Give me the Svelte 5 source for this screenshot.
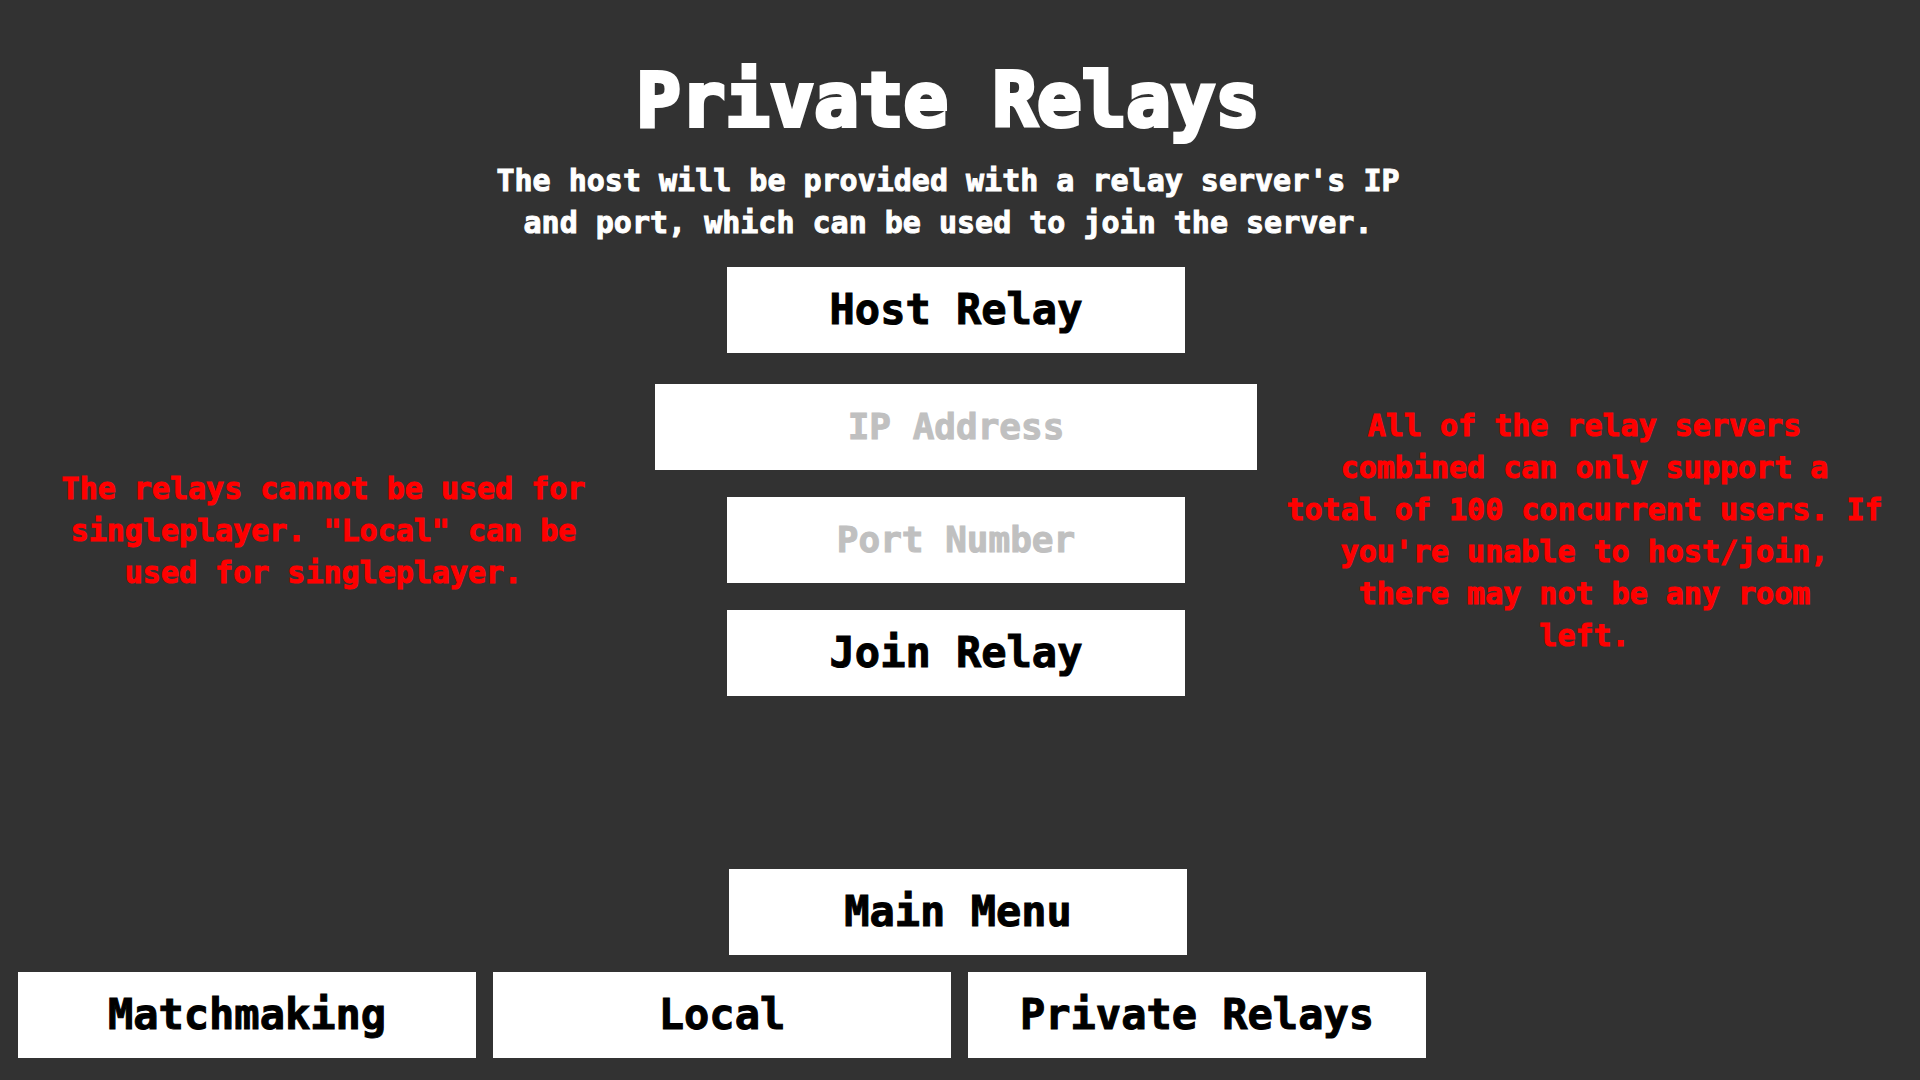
<script>
  let ip = $state('');
  let port = $state('');
  const tabs = ['Matchmaking', 'Local', 'Private Relays'];
</script>

<div class="page">
  <header>
    <h1>Private Relays</h1>
    <p>
      The host will be provided with a relay server's IP<br />
      and port, which can be used to join the server.
    </p>
  </header>

  <main>
    <aside class="left">
      <p>
        The relays cannot be used for<br />
        singleplayer. "Local" can be<br />
        used for singleplayer.
      </p>
    </aside>

    <form onsubmit={(e) => e.preventDefault()}>
      <button class="box" type="button">Host Relay</button>
      <div class="fields">
        <input class="box wide" aria-label="IP Address" placeholder="IP Address" bind:value={ip} />
        <input class="box" aria-label="Port Number" placeholder="Port Number" bind:value={port} />
        <button class="box" type="submit">Join Relay</button>
      </div>
    </form>

    <aside>
      <p>
        All of the relay servers<br />
        combined can only support a<br />
        total of 100 concurrent users. If<br />
        you're unable to host/join,<br />
        there may not be any room<br />
        left.
      </p>
    </aside>
  </main>

  <footer>
    <button class="box" type="button">Main Menu</button>
    <nav>
      {#each tabs as tab}
        <button class="box" type="button">{tab}</button>
      {/each}
    </nav>
  </footer>
</div>

<style>
  :global(body) {
    margin: 0;
    background: #323232;
  }

  .page {
    box-sizing: border-box;
    min-height: 100vh;
    display: flex;
    flex-direction: column;
    padding: 56px 0 22px;
    color: #fff;
    background: #323232;
    font-family: 'DejaVu Sans Mono', 'Liberation Mono', monospace;
    font-weight: 700;
    -webkit-text-stroke: 1px currentColor;
  }

  header {
    padding-right: 24px;
    text-align: center;
  }

  h1,
  p {
    margin: 0;
  }

  h1 {
    font-size: 74px;
    line-height: 88px;
    -webkit-text-stroke-width: 4px;
  }

  p {
    font-size: 30px;
    line-height: 42px;
  }

  header p {
    margin-top: 16px;
  }

  main {
    display: grid;
    grid-template-columns: minmax(0, 1fr) minmax(0, 602px) minmax(0, 1fr);
    margin-top: 23px;
    padding-right: 8px;
  }

  aside {
    display: flex;
    align-items: center;
    justify-content: center;
    padding-top: 98px;
    color: #f00;
    text-align: center;
  }

  .left {
    padding-right: 8px;
  }

  form,
  .fields {
    display: flex;
    flex-direction: column;
    align-items: center;
  }

  form {
    gap: 31px;
  }

  .fields {
    align-self: stretch;
    gap: 27px;
  }

  .box {
    box-sizing: border-box;
    width: 458px;
    max-width: 100%;
    height: 86px;
    padding: 0 0 2px;
    border: 0;
    border-radius: 0;
    background: #fff;
    color: #000;
    font: inherit;
    font-size: 42px;
    text-align: center;
    white-space: nowrap;
  }

  button {
    cursor: pointer;
  }

  input.box {
    font-size: 36px;
    -webkit-text-stroke: 1px currentColor;
  }

  .wide {
    width: 100%;
  }

  input::placeholder {
    color: #c0c0c0;
    opacity: 1;
  }

  footer {
    display: flex;
    flex-direction: column;
    align-items: center;
    gap: 17px;
    margin-top: auto;
    padding-right: 4px;
  }

  nav {
    align-self: stretch;
    display: flex;
    gap: 17px;
    padding-left: 18px;
  }
</style>
